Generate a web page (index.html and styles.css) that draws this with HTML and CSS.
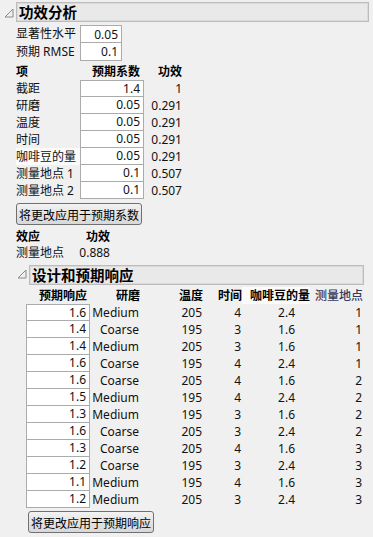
FILE: index.html
```html
<!DOCTYPE html>
<html lang="zh">
<head>
<meta charset="utf-8">
<link rel="stylesheet" href="styles.css">
</head>
<body>
<div class="outline o1">
  <div class="ohead">
    <svg class="tri" width="10" height="10" viewBox="0 0 10 10"><polygon points="9,1 9,9 1,9" fill="none" stroke="#8a8a8a" stroke-width="1"/></svg>
    <div class="obox w1">功效分析</div>
  </div>
  <div class="obody b1">
    <div class="sig">
      <div class="lab">显著性水平</div><div class="inp first">0.05</div>
      <div class="lab">预期 RMSE</div><div class="inp">0.1</div>
    </div>
    <div class="ptab">
      <div class="hd l">项</div><div class="hd r pr">预期系数</div><div class="hd r">功效</div>
      <div class="lab">截距</div><div class="inp first">1.4</div><div class="val">1</div>
      <div class="lab">研磨</div><div class="inp">0.05</div><div class="val">0.291</div>
      <div class="lab">温度</div><div class="inp">0.05</div><div class="val">0.291</div>
      <div class="lab">时间</div><div class="inp">0.05</div><div class="val">0.291</div>
      <div class="lab hl">咖啡豆的量</div><div class="inp">0.05</div><div class="val">0.291</div>
      <div class="lab">测量地点 1</div><div class="inp">0.1</div><div class="val">0.507</div>
      <div class="lab">测量地点 2</div><div class="inp">0.1</div><div class="val">0.507</div>
    </div>
    <button class="btn">将更改应用于预期系数</button>
    <div class="etab">
      <div class="hd l">效应</div><div class="hd r">功效</div>
      <div class="lab">测量地点</div><div class="val">0.888</div>
    </div>

    <div class="outline o2">
      <div class="ohead h2">
        <svg class="tri" width="10" height="10" viewBox="0 0 10 10"><polygon points="9,1 9,9 1,9" fill="none" stroke="#8a8a8a" stroke-width="1"/></svg>
        <div class="obox w2">设计和预期响应</div>
      </div>
      <div class="obody b2">
        <div class="dtab">
          <div class="hd r c1">预期响应</div><div class="hd r">研磨</div><div class="hd r">温度</div><div class="hd r">时间</div><div class="hd r hl">咖啡豆的量</div><div class="hd r blue">测量地点</div>

          <div class="inp first">1.6</div><div class="v">Medium</div><div class="v">205</div><div class="v">4</div><div class="v c5">2.4</div><div class="v">1</div>
          <div class="inp">1.4</div><div class="v">Coarse</div><div class="v">195</div><div class="v">3</div><div class="v c5">1.6</div><div class="v">1</div>
          <div class="inp">1.4</div><div class="v">Medium</div><div class="v">205</div><div class="v">3</div><div class="v c5">1.6</div><div class="v">1</div>
          <div class="inp">1.6</div><div class="v">Coarse</div><div class="v">195</div><div class="v">4</div><div class="v c5">2.4</div><div class="v">1</div>
          <div class="inp">1.6</div><div class="v">Coarse</div><div class="v">205</div><div class="v">4</div><div class="v c5">1.6</div><div class="v">2</div>
          <div class="inp">1.5</div><div class="v">Medium</div><div class="v">195</div><div class="v">4</div><div class="v c5">2.4</div><div class="v">2</div>
          <div class="inp">1.3</div><div class="v">Medium</div><div class="v">195</div><div class="v">3</div><div class="v c5">1.6</div><div class="v">2</div>
          <div class="inp">1.6</div><div class="v">Coarse</div><div class="v">205</div><div class="v">3</div><div class="v c5">2.4</div><div class="v">2</div>
          <div class="inp">1.3</div><div class="v">Coarse</div><div class="v">205</div><div class="v">4</div><div class="v c5">1.6</div><div class="v">3</div>
          <div class="inp">1.2</div><div class="v">Coarse</div><div class="v">195</div><div class="v">3</div><div class="v c5">2.4</div><div class="v">3</div>
          <div class="inp">1.1</div><div class="v">Medium</div><div class="v">195</div><div class="v">4</div><div class="v c5">1.6</div><div class="v">3</div>
          <div class="inp">1.2</div><div class="v">Medium</div><div class="v">205</div><div class="v">3</div><div class="v c5">2.4</div><div class="v">3</div>
        </div>
        <button class="btn b2btn">将更改应用于预期响应</button>
      </div>
    </div>
  </div>
</div>
</body>
</html>
```

FILE: styles.css
```css
* { box-sizing: border-box; }
html, body {
  margin: 0;
  padding: 0;
  background: #f0f0f0;
}
body {
  font-family: "Noto Sans", "Noto Sans CJK SC", sans-serif;
  font-size: 12px;
  color: #111;
  width: 373px;
  height: 537px;
  overflow: hidden;
}
.o1 { padding: 2px 0 0 4px; }
.ohead {
  display: flex;
  align-items: flex-start;
}
.tri {
  display: block;
  margin-top: 6px;
  margin-right: 2px;
  flex: none;
}
.h2 .tri { margin-left: 1px; margin-top: 4px; }
.obox {
  height: 20px;
  border: 1px solid #bcbcbc;
  box-shadow: inset 0 0 0 1px #dadada;
  background: #e9e9e9;
  font-family: "Noto Sans CJK SC", sans-serif;
  font-weight: bold;
  font-size: 14.5px;
  line-height: 18px;
  padding-left: 2px;
  color: #000;
}
.w1 { width: 353px; }
.w2 { width: 335px; }
.b1 { padding-left: 12px; }
.b2 { padding-left: 10px; }

.lab {
  height: 17px;
  line-height: 17px;
  white-space: nowrap;
}
.hl { background: #fbfbfb; }
.inp {
  height: 17px;
  line-height: 16px;
  background: #fff;
  border: 1px solid #ababab;
  border-top: none;
  text-align: right;
  padding-right: 3px;
}
.inp.first { border-top: 1px solid #ababab; }

.sig {
  margin-top: 3px;
  display: grid;
  grid-template-columns: 64px 42px;
  grid-auto-rows: 18px;
}
.sig .lab { height: 18px; line-height: 18px; }
.sig .inp { height: 18px; line-height: 17px; }

.hd {
  height: 17px;
  line-height: 17px;
  font-weight: bold;
  white-space: nowrap;
  color: #000;
}
.l { text-align: left; }
.r { text-align: right; }
.pr { padding-right: 4px; }
.val {
  height: 17px;
  line-height: 17px;
  text-align: right;
}
.ptab {
  margin-top: 2px;
  display: grid;
  grid-template-columns: 64px 64px 38px;
  grid-auto-rows: 17px;
}
.btn {
  display: block;
  margin-top: 4px;
  width: 126px;
  height: 22px;
  padding: 0;
  font-family: "Noto Sans CJK SC", sans-serif;
  font-size: 12px;
  color: #000;
  border: 1px solid #707070;
  border-radius: 3px;
  background: linear-gradient(#f3f3f3, #e3e3e3 50%, #d8d8d8);
}
.etab {
  margin-top: 4px;
  display: grid;
  grid-template-columns: 62px 32px;
  grid-auto-rows: 16px;
}
.etab .hd, .etab .lab, .etab .val { height: 16px; line-height: 16px; }
.etab .lab { line-height: 15px; }

.o2 { margin-top: 4px; }
.dtab {
  margin-top: 2px;
  display: grid;
  grid-template-columns: 64px 50px 63px 39px 68px 53px;
  grid-auto-rows: 17px;
}
.dtab .c1 { padding-right: 3px; }
.dtab .hl { padding-left: 4px; }
.hd.blue { color: #333a5c; font-weight: 500; }
.v {
  height: 17px;
  line-height: 17px;
  text-align: right;
  padding-right: 1px;
}
.v.c5 { padding-right: 15px; }
.b2btn { margin-top: 3px; margin-left: 2px; }
```
